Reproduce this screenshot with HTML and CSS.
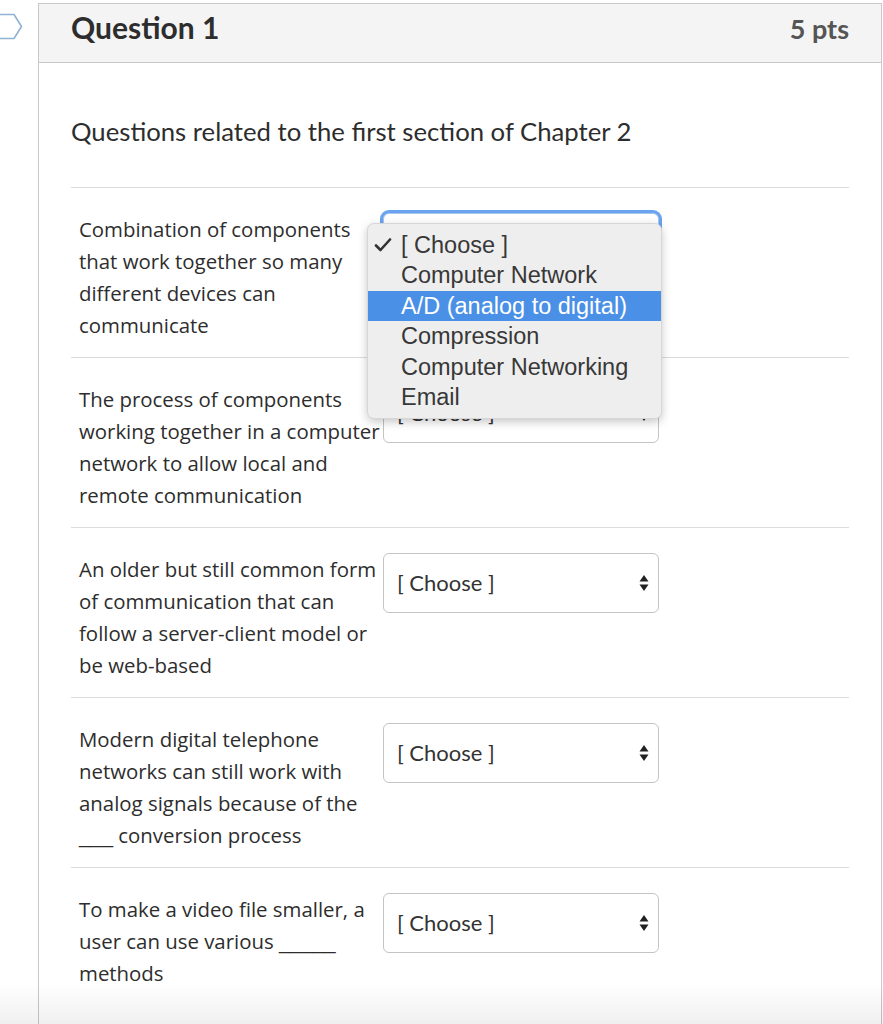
FILE: index.html
```html
<!DOCTYPE html>
<html>
<head>
<meta charset="utf-8">
<link rel="stylesheet" href="styles.css">
</head>
<body>
<div class="page">
  <div class="gutter">
    <svg class="flag" width="26" height="30" viewBox="0 0 26 30"><path d="M-2 2.5 H14 L21.5 14.5 L14 26.5 H-2" fill="none" stroke="#8fb3d2" stroke-width="1.6" stroke-linejoin="round"/></svg>
  </div>
  <div class="question">
    <div class="qheader">
      <h2 class="qtitle">Question 1</h2>
      <span class="qpts">5 pts</span>
    </div>
    <div class="qbody">
      <p class="intro">Questions related to the first section of Chapter 2</p>

      <div class="row">
        <div class="prompt">Combination of components that work together so many different devices can communicate</div>
        <div class="select focused"><span>[ Choose ]</span>
          <svg class="arrows" width="10" height="18" viewBox="0 0 10 18"><path d="M5 1 L9.5 7.5 H0.5 Z M5 17 L9.5 10.5 H0.5 Z" fill="#222"/></svg>
        </div>
        <div class="menu">
          <div class="opt"><svg class="check" width="18" height="14" viewBox="0 0 18 14"><path d="M2 7.5 L6.5 12 L16 1.5" fill="none" stroke="#333" stroke-width="2.6" stroke-linecap="round" stroke-linejoin="round"/></svg>[ Choose ]</div>
          <div class="opt">Computer Network</div>
          <div class="opt hl">A/D (analog to digital)</div>
          <div class="opt">Compression</div>
          <div class="opt">Computer Networking</div>
          <div class="opt">Email</div>
        </div>
      </div>

      <div class="row">
        <div class="prompt">The process of components working together in a computer network to allow local and remote communication</div>
        <div class="select"><span>[ Choose ]</span>
          <svg class="arrows" width="10" height="18" viewBox="0 0 10 18"><path d="M5 1 L9.5 7.5 H0.5 Z M5 17 L9.5 10.5 H0.5 Z" fill="#222"/></svg>
        </div>
      </div>

      <div class="row">
        <div class="prompt">An older but still common form of communication that can follow a server-client model or be web-based</div>
        <div class="select"><span>[ Choose ]</span>
          <svg class="arrows" width="10" height="18" viewBox="0 0 10 18"><path d="M5 1 L9.5 7.5 H0.5 Z M5 17 L9.5 10.5 H0.5 Z" fill="#222"/></svg>
        </div>
      </div>

      <div class="row">
        <div class="prompt">Modern digital telephone networks can still work with analog signals because of the <span class="blank">___</span> conversion process</div>
        <div class="select"><span>[ Choose ]</span>
          <svg class="arrows" width="10" height="18" viewBox="0 0 10 18"><path d="M5 1 L9.5 7.5 H0.5 Z M5 17 L9.5 10.5 H0.5 Z" fill="#222"/></svg>
        </div>
      </div>

      <div class="row">
        <div class="prompt">To make a video file smaller, a user can use various <span class="blank">_____</span> methods</div>
        <div class="select"><span>[ Choose ]</span>
          <svg class="arrows" width="10" height="18" viewBox="0 0 10 18"><path d="M5 1 L9.5 7.5 H0.5 Z M5 17 L9.5 10.5 H0.5 Z" fill="#222"/></svg>
        </div>
      </div>
    </div>
  </div>
</div>
<div class="fade"></div>
</body>
</html>
```
FILE: styles.css
```css
html, body {
  margin: 0;
  padding: 0;
  background: #fff;
}
body {
  width: 883px;
  height: 1024px;
  overflow: hidden;
  font-family: Lato, "Open Sans", sans-serif;
  color: #2d2d2d;
}
.page {
  display: flex;
  align-items: flex-start;
  height: 1024px;
}
.gutter {
  width: 38px;
  flex: none;
  padding-top: 12px;
}
.flag {
  display: block;
}
.question {
  width: 842px;
  flex: none;
  margin-top: 3px;
  border: 1px solid #c8c8c8;
  border-bottom: none;
  min-height: 1030px;
}
.qheader {
  display: flex;
  align-items: center;
  justify-content: space-between;
  height: 58px;
  padding: 0 32px;
  background: #f4f4f4;
  border-bottom: 1px solid #c8c8c8;
}
.qtitle {
  margin: 0;
  font-family: Lato, sans-serif;
  font-weight: 700;
  font-size: 30px;
  color: #2d2d2d;
  line-height: 1;
  padding-bottom: 12px;
}
.qpts {
  font-family: Lato, sans-serif;
  font-weight: 700;
  font-size: 27px;
  color: #555;
  line-height: 1;
  padding-bottom: 10px;
}
.qbody {
  padding: 50px 32px 0 32px;
}
.intro {
  margin: 0 0 38px 0;
  font-family: Lato, sans-serif;
  font-size: 25.7px;
  line-height: 36px;
  color: #2d2d2d;
}
.row {
  position: relative;
  display: flex;
  align-items: flex-start;
  border-top: 1px solid #dcdcdc;
  padding: 25px 0 16px 8px;
}
.prompt {
  width: 304px;
  flex: none;
  font-family: "Open Sans", sans-serif;
  font-size: 20.4px;
  line-height: 32px;
  color: #2d2d2d;
}
.blank {
  font-family: "Liberation Sans", Arial, sans-serif;
  line-height: 0;
}
.select {
  width: 274px;
  height: 58px;
  flex: none;
  box-sizing: content-box;
  border: 1px solid #c4c4c4;
  border-radius: 6px;
  background: #fff;
  display: flex;
  align-items: center;
  justify-content: space-between;
  padding: 0;
}
.select span {
  font-family: Lato, sans-serif;
  font-size: 22px;
  color: #333;
  padding-left: 13px;
  padding-bottom: 2px;
}
.arrows {
  margin-right: 9px;
}
.select.focused {
  border-color: #a9c6ee;
  box-shadow: 0 0 0 3px #6aa3ef;
}
.menu {
  position: absolute;
  z-index: 10;
  left: 296px;
  top: 35px;
  width: 295px;
  padding: 6px 0;
  background: #eeeeee;
  border: 1px solid #d6d6d6;
  border-radius: 7px;
  box-shadow: 0 3px 10px rgba(0, 0, 0, 0.22);
  box-sizing: border-box;
}
.opt {
  position: relative;
  height: 30.4px;
  line-height: 30px;
  padding-left: 33px;
  font-family: "Liberation Sans", Arial, sans-serif;
  font-size: 23.5px;
  color: #383838;
  white-space: nowrap;
}
.opt.hl {
  background: #4a90e6;
  color: #fff;
}
.check {
  position: absolute;
  left: 6px;
  top: 8px;
}
.fade {
  position: fixed;
  left: 0;
  right: 0;
  bottom: 0;
  height: 40px;
  background: linear-gradient(to bottom, rgba(0,0,0,0), rgba(0,0,0,0.06));
  pointer-events: none;
}
```
